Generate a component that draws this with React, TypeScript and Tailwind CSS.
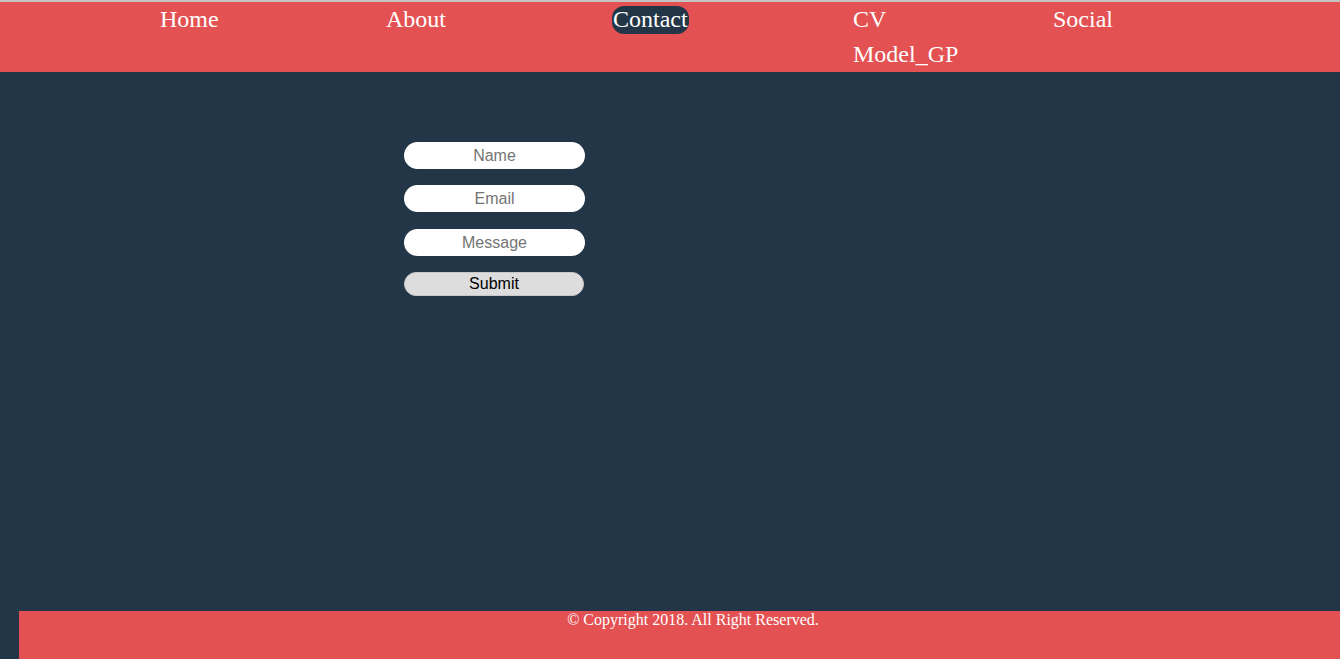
import React from "react";

export default function App() {
  const serif = { fontFamily: '"Liberation Serif", "Times New Roman", serif' } as React.CSSProperties;
  const sans = { fontFamily: '"Liberation Sans", Arial, sans-serif' } as React.CSSProperties;
  return (
    <div className="w-full h-[659px] bg-[#233647] flex flex-col overflow-hidden">
      <div className="h-[2px] bg-[#c4c4c4]" />
      <header className="h-[70px] bg-[#e35152] pt-[3px] text-white text-[24px]" style={serif}>
        <div className="flex pl-[160px] h-[28px] leading-[28px]">
          <span className="w-[226px]">Home</span>
          <span className="w-[226px]">About</span>
          <span className="w-[241px]">
            <span className="inline-block bg-[#233647] rounded-[12px] px-[1px] mt-[1px] h-[28px] leading-[27px]">Contact</span>
          </span>
          <span className="w-[200px]">CV</span>
          <span>Social</span>
        </div>
        <div className="flex pl-[853px] h-[28px] leading-[28px] mt-[7px]">
          <span>Model_GP</span>
        </div>
      </header>
      <main className="flex-1 pt-[70px] pl-[404px]">
        <div className="flex flex-col w-[181px]" style={sans}>
          <input
            placeholder="Name"
            className="h-[27px] w-[181px] rounded-full bg-white text-center text-[16px] text-black placeholder:text-[#757575] outline-none"
          />
          <input
            placeholder="Email"
            className="mt-[16px] h-[27px] w-[181px] rounded-full bg-white text-center text-[16px] text-black placeholder:text-[#757575] outline-none"
          />
          <input
            placeholder="Message"
            className="mt-[17px] h-[27px] w-[181px] rounded-full bg-white text-center text-[16px] text-black placeholder:text-[#757575] outline-none"
          />
          <button className="mt-[16px] h-[24px] w-[180px] rounded-full bg-[#dddddd] border border-[#c8c8c8] text-[16px] text-black leading-[22px]">
            Submit
          </button>
        </div>
      </main>
      <footer className="ml-[19px] h-[48px] bg-[#e35152] text-white text-[16px] leading-[18px] text-center pl-[27px]" style={serif}>
        © Copyright 2018. All Right Reserved.
      </footer>
    </div>
  );
}
